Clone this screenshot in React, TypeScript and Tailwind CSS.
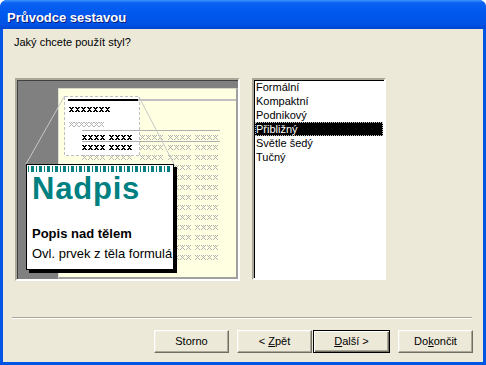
import React from 'react';

const ui = "font-['Liberation_Sans',Arial,sans-serif]";

const styles = ['Formální', 'Kompaktní', 'Podnikový', 'Přibližný', 'Světle šedý', 'Tučný'];

// x glyph runs for the report preview
const glyphs = (id: string, x: number, y: number, n: number, pitch = 6) =>
  Array.from({ length: n }, (_, i) => <use key={`${id}-${x}-${y}-${i}`} href={`#${id}`} x={x + i * pitch} y={y} />);

const bodyRows = [155, 165, 175, 185, 195, 205, 215, 225, 235, 245, 255];

const ReportDrawing = () => (
  <svg className="absolute inset-0" width={221} height={199} viewBox="17 80 221 199" shapeRendering="crispEdges">
    <defs>
      <g id="bx" fill="#000">
        <rect x="0" y="0" width="2" height="1" />
        <rect x="3" y="0" width="2" height="1" />
        <rect x="1" y="1" width="3" height="1" />
        <rect x="2" y="2" width="1" height="1" />
        <rect x="1" y="3" width="3" height="1" />
        <rect x="0" y="4" width="2" height="1" />
        <rect x="3" y="4" width="2" height="1" />
      </g>
      <g id="gx" fill="#b4b4b4">
        <rect x="0" y="0" width="1" height="1" />
        <rect x="2" y="0" width="1" height="1" />
        <rect x="4" y="0" width="1" height="1" />
        <rect x="1" y="1" width="1" height="1" />
        <rect x="3" y="1" width="1" height="1" />
        <rect x="2" y="2" width="1" height="1" />
        <rect x="1" y="3" width="1" height="1" />
        <rect x="3" y="3" width="1" height="1" />
        <rect x="0" y="4" width="1" height="1" />
        <rect x="4" y="4" width="1" height="1" />
      </g>
    </defs>
    <rect x="64.5" y="96.5" width="75" height="59" fill="#fff" stroke="#c0c0c0" strokeDasharray="3 2" />
    <rect x="68" y="99" width="70" height="2" fill="#000" />
    <rect x="138" y="99" width="98" height="2" fill="#c0c0c0" />
    {glyphs('bx', 69, 107, 7)}
    {glyphs('gx', 69, 122, 7, 5)}
    <rect x="82" y="130" width="138" height="1" fill="#b0b0b0" />
    <rect x="82" y="141" width="138" height="1" fill="#b0b0b0" />
    {glyphs('bx', 82, 135, 4)}
    {glyphs('bx', 109, 135, 4)}
    {glyphs('bx', 82, 145, 4)}
    {glyphs('bx', 109, 145, 4)}
    {[135, 145, ...bodyRows].map((y) => (
      <g key={y}>
        {glyphs('gx', 140, y, 4)}
        {glyphs('gx', 168, y, 4)}
        {glyphs('gx', 195, y, 4)}
      </g>
    ))}
    {bodyRows.map((y) => (
      <g key={`l${y}`}>
        {glyphs('gx', 82, y, 4)}
        {glyphs('gx', 109, y, 4)}
      </g>
    ))}
    <g shapeRendering="auto" stroke="#c8c8c8" strokeWidth="1">
      <line x1="64" y1="97" x2="26" y2="164" />
      <line x1="139" y1="97" x2="174" y2="164" />
    </g>
  </svg>
);

const Stripe = () => (
  <svg width={144} height={6} className="block">
    <defs>
      <pattern id="st" width="8" height="6" patternUnits="userSpaceOnUse">
        <rect x="0" y="0" width="1" height="6" fill="#008080" />
        <rect x="3" y="0" width="3" height="6" fill="#008080" />
      </pattern>
    </defs>
    <rect width="144" height="6" fill="url(#st)" />
  </svg>
);

const sunken =
  'border-2 border-t-[#aca899] border-l-[#aca899] border-r-white border-b-white';

function Btn({ label, w, def }: { label: React.ReactNode; w: string; def?: boolean }) {
  return (
    <button
      className={`${w} h-[23px] bg-[#ece9d8] text-[11px] text-black ${ui} ${
        def
          ? 'border border-black shadow-[inset_1px_1px_0_#fff,inset_-1px_-1px_0_#716f64,inset_-2px_-2px_0_#aca899]'
          : 'border border-t-white border-l-white border-r-[#716f64] border-b-[#716f64] shadow-[inset_-1px_-1px_0_#aca899,inset_1px_1px_0_#f1efe2]'
      }`}
    >
      {label}
    </button>
  );
}

export default function App() {
  return (
    <div className={`w-[486px] h-[365px] bg-white overflow-hidden ${ui}`}>
      <div className="w-full h-full flex flex-col rounded-t-[7px] bg-[#0055e5] overflow-hidden">
        {/* title bar */}
        <div className="h-[29px] shrink-0 pl-[7px] pt-[10px] bg-[linear-gradient(to_bottom,#3d95ff_0%,#0a61f2_10%,#0058ee_45%,#0052e4_85%,#0046d2_100%)]">
          <div className="text-[13px] leading-[15px] font-bold text-white [text-shadow:1px_1px_0_#0a1c7a]">
            Průvodce sestavou
          </div>
        </div>

        {/* client */}
        <div className="mx-[3px] h-[333px] shrink-0 bg-[#ece9d8] flex flex-col">
          <div className="mt-[7px] ml-[11px] text-[11px] leading-[13px] text-black">Jaký chcete použít styl?</div>

          <div className="mt-[29px] ml-[12px] flex gap-[12px]">
            {/* preview */}
            <div className={`relative w-[225px] h-[203px] bg-[#808080] ${sunken} shadow-[inset_1px_1px_0_#404040]`}>
              <div className="absolute left-[41px] top-[8px] right-0 bottom-0 bg-[#ffffe1] border-t border-l border-t-[#d8d8c8] border-l-[#e0e0d0] border-r-2 border-b-2 border-r-[#a0a0a0] border-b-[#a0a0a0]" />
              <ReportDrawing />
              <div className="absolute left-[9px] top-[84px] w-[148px] h-[106px] bg-white border border-black shadow-[3px_3px_0_#000] overflow-hidden">
                <div className="mt-[1px] ml-[1px]">
                  <Stripe />
                </div>
                <div className="mt-[1px] pl-[5px] text-[31px] leading-[31px] tracking-[0.8px] font-bold text-[#008080]">Nadpis</div>
                <div className="mt-[22px] pl-[5px] text-[13px] leading-[15px] font-bold text-black">Popis nad tělem</div>
                <div className="mt-[5px] pl-[5px] text-[13px] leading-[15px] text-black whitespace-nowrap">
                  Ovl. prvek z těla formulá
                </div>
              </div>
            </div>

            {/* list */}
            <div className={`w-[134px] h-[202px] bg-white ${sunken} shadow-[inset_1px_1px_0_#000]`}>
              <div className="pl-[1px] pr-[1px]">
                {styles.map((s) => {
                  const sel = s === 'Přibližný';
                  return (
                    <div
                      key={s}
                      className={`h-[14px] text-[11px] leading-[14px] pl-[1px] whitespace-nowrap ${
                        sel ? 'bg-black text-white outline outline-1 outline-dotted -outline-offset-1 outline-[#c0c0c0]' : 'text-black'
                      }`}
                    >
                      {s}
                    </div>
                  );
                })}
              </div>
            </div>
          </div>

          {/* separator */}
          <div className="mt-[36px] ml-[9px] w-[460px] h-[2px] border-t border-t-[#aca899] border-b border-b-white" />

          {/* buttons */}
          <div className="mt-[11px] flex justify-end pr-[10px]">
            <Btn label="Storno" w="w-[75px]" />
            <div className="w-[8px]" />
            <Btn label={<><span>&lt; </span><span className="underline">Z</span>pět</>} w="w-[75px]" />
            <div className="w-[1px]" />
            <Btn label={<><span className="underline">D</span>alší &gt;</>} w="w-[77px]" def />
            <div className="w-[8px]" />
            <Btn label={<>Do<span className="underline">k</span>ončit</>} w="w-[75px]" />
          </div>
        </div>
      </div>
    </div>
  );
}
